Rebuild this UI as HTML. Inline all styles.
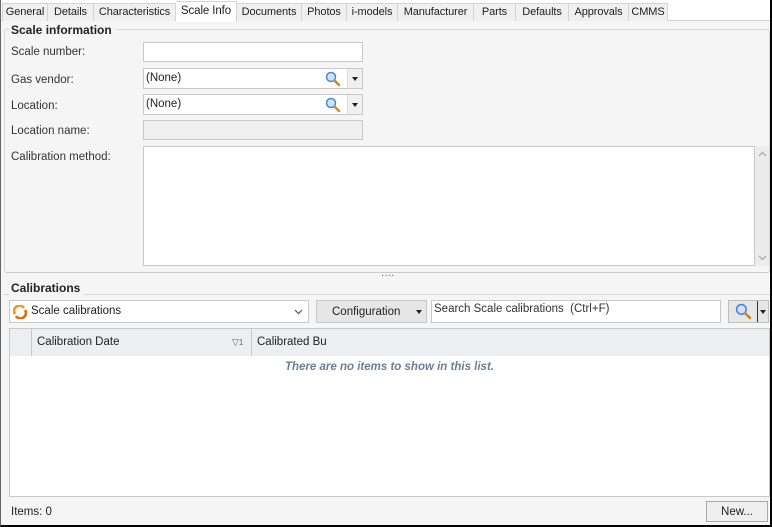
<!DOCTYPE html>
<html><head><style>
*{box-sizing:border-box;margin:0;padding:0}
body{width:772px;height:527px;position:relative;overflow:hidden;background:#f5f5f5;font-family:"Liberation Sans",sans-serif;font-size:12px;color:#222}
.a{position:absolute}
.tab{position:absolute;top:3px;height:18px;border:1px solid #d4d4d4;border-bottom:none;border-left:none;background:#f0f0f0;text-align:center;line-height:16px;font-size:11px;color:#1e1e1e;letter-spacing:-0.1px}
.lbl{position:absolute;left:11px;font-size:11.5px;color:#333}
.inp{position:absolute;left:143px;width:220px;background:#fff;border:1px solid #c8c8c8}
.dd{position:absolute;width:15px;background:#f0f0f0;border-left:1px solid #ddd;top:0;bottom:0;right:0}
.dd:after{content:"";position:absolute;left:4px;top:8px;border:3px solid transparent;border-top:4px solid #222}
</style></head><body>
<div class="a" style="left:0;top:0;width:772px;height:21px;background:#fff"></div>
<div class="a" style="left:0;top:20px;width:772px;height:1px;background:#d4d4d4"></div>
<div class="tab" style="left:2px;width:46px;border-left:1px solid #d4d4d4">General</div>
<div class="tab" style="left:48px;width:46px">Details</div>
<div class="tab" style="left:94px;width:82px">Characteristics</div>
<div class="tab" style="left:176px;width:61px;top:1px;height:21px;background:#fff;line-height:18px;font-size:11.5px">Scale Info</div>
<div class="tab" style="left:237px;width:65px">Documents</div>
<div class="tab" style="left:302px;width:45px">Photos</div>
<div class="tab" style="left:347px;width:51px">i-models</div>
<div class="tab" style="left:398px;width:76px">Manufacturer</div>
<div class="tab" style="left:474px;width:42px">Parts</div>
<div class="tab" style="left:516px;width:53px">Defaults</div>
<div class="tab" style="left:569px;width:60px">Approvals</div>
<div class="tab" style="left:629px;width:39px">CMMS</div>

<div class="a" style="left:4px;top:29px;width:766px;height:244px;border:1px solid #d8d8d8;border-bottom:1px solid #ccc;border-radius:3px"></div>
<div class="a" style="left:9px;top:22px;padding:0 4px 0 2px;background:#f5f5f5;font-weight:bold;font-size:12px;color:#222;line-height:16px">Scale information</div>

<div class="lbl" style="top:46px">Scale number:</div>
<div class="inp" style="top:42px;height:20px"></div>
<div class="lbl" style="top:74px">Gas vendor:</div>
<div class="inp" style="top:68px;height:21px;padding:3px 2px;font-size:11.5px">(None)<svg class="a" style="left:181px;top:2px" width="16" height="16" viewBox="0 0 16 16"><circle cx="6" cy="6" r="4.5" fill="#cfe3fb" stroke="#4a86d6" stroke-width="1.5"/><path d="M9.5 9.5l4.5 4.5" stroke="#c98b2a" stroke-width="2.5" stroke-linecap="round"/></svg><div class="dd"></div></div>
<div class="lbl" style="top:100px">Location:</div>
<div class="inp" style="top:94px;height:21px;padding:3px 2px;font-size:11.5px">(None)<svg class="a" style="left:181px;top:2px" width="16" height="16" viewBox="0 0 16 16"><circle cx="6" cy="6" r="4.5" fill="#cfe3fb" stroke="#4a86d6" stroke-width="1.5"/><path d="M9.5 9.5l4.5 4.5" stroke="#c98b2a" stroke-width="2.5" stroke-linecap="round"/></svg><div class="dd"></div></div>
<div class="lbl" style="top:125px">Location name:</div>
<div class="inp" style="top:120px;height:20px;background:#f0f0f0"></div>
<div class="lbl" style="top:151px">Calibration method:</div>
<div class="inp" style="top:146px;height:120px;width:612px"></div>
<div class="a" style="left:755px;top:146px;width:14px;height:120px;background:#ececec">
<svg class="a" style="left:3px;top:5px" width="9" height="6"><path d="M1 5L4.5 1.5L8 5" stroke="#aaa" fill="none" stroke-width="1.3"/></svg>
<svg class="a" style="left:3px;top:109px" width="9" height="6"><path d="M1 1L4.5 4.5L8 1" stroke="#aaa" fill="none" stroke-width="1.3"/></svg></div>
<div class="a" style="left:381px;top:272px;font-size:10px;color:#555;line-height:8px">····</div>

<div class="a" style="left:4px;top:294px;width:766px;height:1px;background:#d8d8d8"></div>
<div class="a" style="left:9px;top:280px;padding:0 4px 0 2px;background:#f5f5f5;font-weight:bold;font-size:12px;line-height:16px">Calibrations</div>

<div class="a" style="left:9px;top:300px;width:300px;height:23px;background:#fff;border:1px solid #c8c8c8;padding:4px 0 0 21px;font-size:11.5px">Scale calibrations
<svg class="a" style="left:3px;top:4px" width="14" height="14" viewBox="0 0 14 14"><path d="M2 9A5 5 0 0 1 11 3" stroke="#f29a1e" stroke-width="2.6" fill="none"/><path d="M12 5A5 5 0 0 1 3 11" stroke="#e56a10" stroke-width="2.6" fill="none"/></svg>
<svg class="a" style="left:284px;top:8px" width="9" height="6"><path d="M1 1L4.5 4.5L8 1" stroke="#555" fill="none" stroke-width="1.2"/></svg></div>
<div class="a" style="left:316px;top:300px;width:111px;height:23px;background:#e6e6e6;border:1px solid #c8c8c8;padding:5px 0 0 15px;font-size:11.5px">Configuration<span class="a" style="right:4px;top:9px;border:3px solid transparent;border-top:4px solid #222"></span></div>
<div class="a" style="left:431px;top:300px;width:290px;height:23px;background:#fff;border:1px solid #c8c8c8;padding:2px 2px;font-size:11.5px;color:#333">Search Scale calibrations&nbsp; (Ctrl+F)</div>
<div class="a" style="left:728px;top:300px;width:41px;height:23px;background:#e6e6e6;border:1px solid #bdbdbd"><svg class="a" style="left:6px;top:2px" width="17" height="17" viewBox="0 0 16 16"><circle cx="6" cy="6" r="4.5" fill="#cfe3fb" stroke="#4a86d6" stroke-width="1.5"/><path d="M9.5 9.5l4.5 4.5" stroke="#c98b2a" stroke-width="2.5" stroke-linecap="round"/></svg><div class="a" style="left:28px;top:0;width:1px;height:21px;background:#333"></div><span class="a" style="left:31px;top:9px;border:3px solid transparent;border-top:4px solid #222"></span></div>

<div class="a" style="left:9px;top:328px;width:761px;height:169px;background:#fff;border:1px solid #c8c8c8"></div>
<div class="a" style="left:10px;top:329px;width:759px;height:27px;background:#eceef2"></div>
<div class="a" style="left:31px;top:329px;width:1px;height:27px;background:#c8c8c8"></div>
<div class="a" style="left:251px;top:329px;width:1px;height:27px;background:#c8c8c8"></div>
<div class="a" style="left:37px;top:336px;font-size:11.5px">Calibration Date</div>
<div class="a" style="left:232px;top:337px;font-size:9px;color:#666">&#9661;<span style="font-size:8px">1</span></div>
<div class="a" style="left:257px;top:336px;font-size:11.5px">Calibrated Bu</div>
<div class="a" style="left:10px;top:361px;width:759px;text-align:center;font-style:italic;font-weight:bold;color:#6e7e92;font-size:11.5px">There are no items to show in this list.</div>

<div class="a" style="left:11px;top:506px;font-size:11.5px">Items: 0</div>
<div class="a" style="left:706px;top:501px;width:62px;height:21px;background:#efefef;border:1px solid #aaa;text-align:center;line-height:20px;font-size:11.5px">New...</div>

<div class="a" style="left:0;top:0;width:772px;height:527px;border:1px solid #333;border-top:none;border-left:1px solid #666;border-right:2px solid #000;border-bottom:2px solid #000"></div>
</body></html>
